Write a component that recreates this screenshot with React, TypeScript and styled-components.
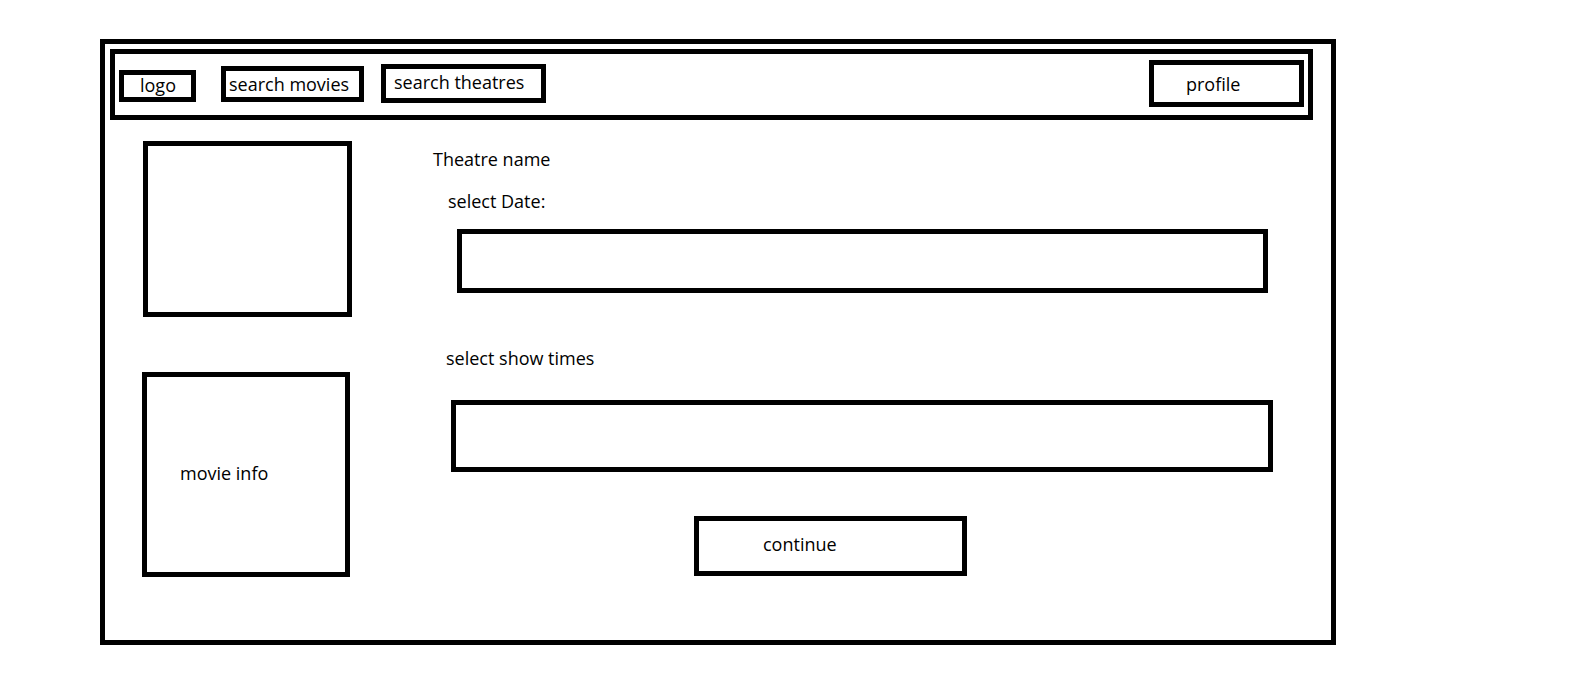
import React from 'react';
import styled, { createGlobalStyle } from 'styled-components';

// Wireframe: theatre page with date + show time pickers

const GlobalStyle = createGlobalStyle`
  html, body {
    margin: 0;
    padding: 0;
    background: #fff;
  }
  body {
    font-family: 'Open Sans', 'Noto Sans', sans-serif;
    color: #000;
  }
`;

const Page = styled.div`
  padding: 39px 0 0 100px;
`;

const Frame = styled.div`
  box-sizing: border-box;
  width: 1236px;
  height: 606px;
  border: 5px solid #000;
  padding: 5px 18px 0 5px;
`;

const Nav = styled.nav`
  box-sizing: border-box;
  height: 71px;
  border: 5px solid #000;
  display: flex;
  align-items: flex-start;
`;

const NavItem = styled.div<{ $w: number; $h: number; $mt: number; $ml?: number; $pl: number; $pb?: number; $right?: boolean }>`
  box-sizing: border-box;
  width: ${({ $w }) => $w}px;
  height: ${({ $h }) => $h}px;
  margin-top: ${({ $mt }) => $mt}px;
  margin-left: ${({ $ml, $right }) => ($right ? 'auto' : `${$ml ?? 0}px`)};
  margin-right: ${({ $right }) => ($right ? '4px' : '0')};
  padding-left: ${({ $pl }) => $pl}px;
  padding-bottom: ${({ $pb }) => $pb ?? 0}px;
  border: 5px solid #000;
  display: flex;
  align-items: center;
  font-size: 18px;
  line-height: 18px;
  white-space: nowrap;
`;

const Body = styled.div`
  display: flex;
  align-items: flex-start;
`;

const LeftCol = styled.div`
  display: flex;
  flex-direction: column;
  padding: 21px 0 0 33px;
  gap: 55px;
`;

const Poster = styled.div`
  box-sizing: border-box;
  width: 209px;
  height: 176px;
  border: 5px solid #000;
`;

const InfoBox = styled.div`
  box-sizing: border-box;
  width: 208px;
  height: 205px;
  margin-left: -1px;
  border: 5px solid #000;
  display: flex;
  align-items: center;
  padding: 0 0 4px 33px;
  font-size: 18px;
  line-height: 18px;
`;

const RightCol = styled.div`
  display: flex;
  flex-direction: column;
  align-items: flex-start;
  margin-left: 81px;
  padding-top: 30px;
`;

const Label = styled.div<{ $ml: number; $mt: number }>`
  margin: ${({ $mt }) => $mt}px 0 0 ${({ $ml }) => $ml}px;
  font-size: 18px;
  line-height: 18px;
  white-space: nowrap;
`;

const Field = styled.div<{ $ml: number; $mt: number; $w: number; $h: number }>`
  box-sizing: border-box;
  margin: ${({ $mt }) => $mt}px 0 0 ${({ $ml }) => $ml}px;
  width: ${({ $w }) => $w}px;
  height: ${({ $h }) => $h}px;
  border: 5px solid #000;
`;

const ContinueButton = styled.button`
  box-sizing: border-box;
  margin: 44px 0 0 261px;
  width: 273px;
  height: 60px;
  border: 5px solid #000;
  background: #fff;
  display: flex;
  align-items: center;
  padding: 0 0 4px 64px;
  font-family: inherit;
  font-size: 18px;
  line-height: 18px;
  color: #000;
  cursor: pointer;
`;

export default function App() {
  return (
    <>
      <GlobalStyle />
      <Page>
        <Frame>
          <Nav>
            <NavItem $w={77} $h={32} $mt={16} $ml={4} $pl={16} $pb={3}>logo</NavItem>
            <NavItem $w={143} $h={36} $mt={12} $ml={25} $pl={3}>search movies</NavItem>
            <NavItem $w={165} $h={39} $mt={10} $ml={17} $pl={8} $pb={3}>search theatres</NavItem>
            <NavItem $w={155} $h={47} $mt={6} $pl={32} $right>profile</NavItem>
          </Nav>
          <Body>
            <LeftCol>
              <Poster />
              <InfoBox>movie info</InfoBox>
            </LeftCol>
            <RightCol>
              <Label $ml={0} $mt={0}>Theatre name</Label>
              <Label $ml={15} $mt={24}>select Date:</Label>
              <Field $ml={24} $mt={19} $w={811} $h={64} />
              <Label $ml={13} $mt={56}>select show times</Label>
              <Field $ml={18} $mt={33} $w={822} $h={72} />
              <ContinueButton>continue</ContinueButton>
            </RightCol>
          </Body>
        </Frame>
      </Page>
    </>
  );
}
